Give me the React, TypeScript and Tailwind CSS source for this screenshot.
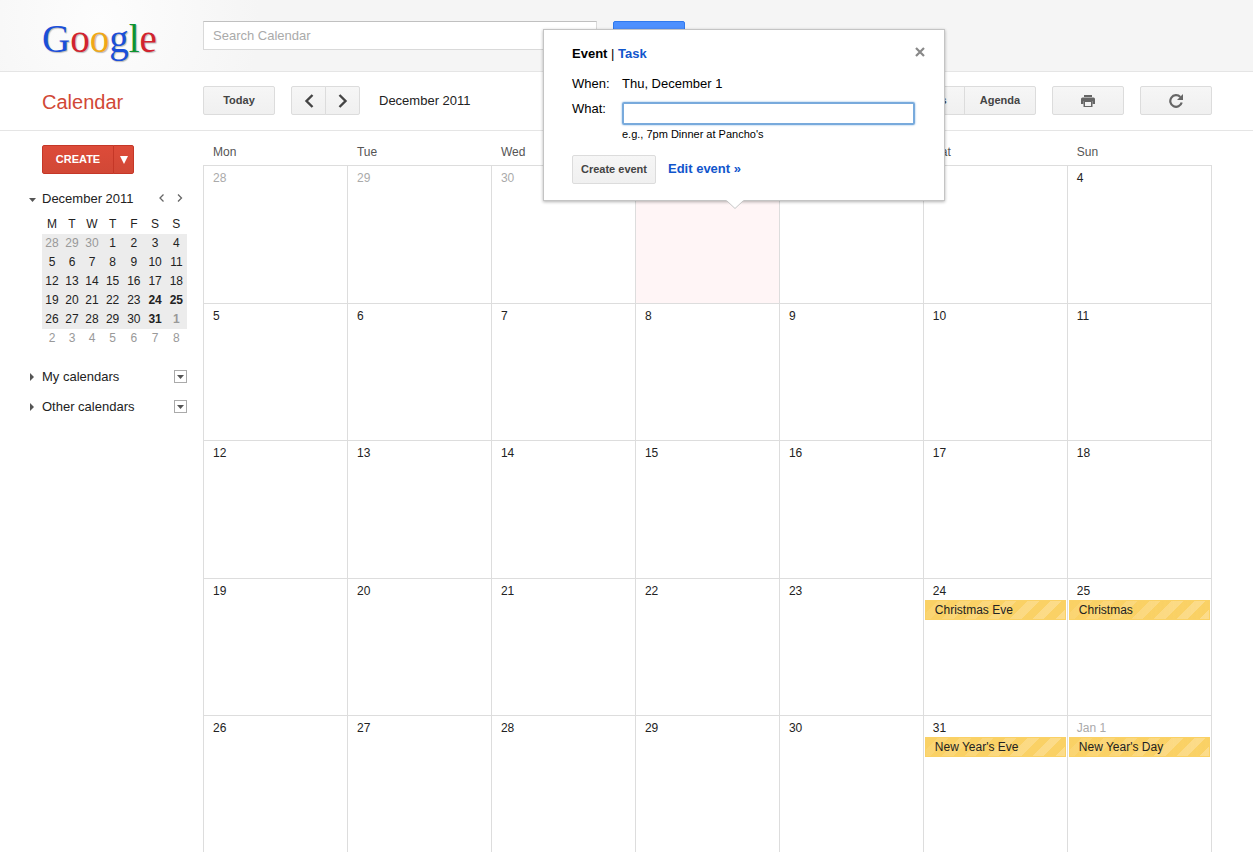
import { useState, type ReactNode } from 'react';

type Day = {
  label: string;
  muted?: boolean;
  today?: boolean;
  event?: string;
};

const weekdays = ['Mon', 'Tue', 'Wed', 'Thu', 'Fri', 'Sat', 'Sun'];

const weeks: Day[][] = [
  [
    { label: '28', muted: true },
    { label: '29', muted: true },
    { label: '30', muted: true },
    { label: '1', today: true },
    { label: '2' },
    { label: '3' },
    { label: '4' },
  ],
  ['5', '6', '7', '8', '9', '10', '11'].map((label) => ({ label })),
  ['12', '13', '14', '15', '16', '17', '18'].map((label) => ({ label })),
  [
    ...['19', '20', '21', '22', '23'].map((label) => ({ label })),
    { label: '24', event: 'Christmas Eve' },
    { label: '25', event: 'Christmas' },
  ],
  [
    ...['26', '27', '28', '29', '30'].map((label) => ({ label })),
    { label: '31', event: "New Year's Eve" },
    { label: 'Jan 1', muted: true, event: "New Year's Day" },
  ],
];

const miniWeeks = [
  [28, 29, 30, 1, 2, 3, 4],
  [5, 6, 7, 8, 9, 10, 11],
  [12, 13, 14, 15, 16, 17, 18],
  [19, 20, 21, 22, 23, 24, 25],
  [26, 27, 28, 29, 30, 31, 1],
  [2, 3, 4, 5, 6, 7, 8],
];

const buttonStyle =
  'flex h-[29px] items-center justify-center border border-[#dcdcdc] bg-gradient-to-b from-[#f6f6f6] to-[#f0f0f0] text-[11px] font-bold text-[#444]';

function Logo() {
  return (
    <a
      href="#"
      aria-label="Google"
      className="flex w-[161px] pt-1.5 font-['Liberation_Serif',serif] text-[39px] leading-10 [text-shadow:1px_1px_1px_#bbb]"
    >
      <span className="text-[#1a4fd8]">G</span>
      <span className="text-[#d2232f]">o</span>
      <span className="text-[#f0a818]">o</span>
      <span className="text-[#1a4fd8]">g</span>
      <span className="text-[#0f9330]">l</span>
      <span className="text-[#d2232f]">e</span>
    </a>
  );
}

function Header() {
  const [search, setSearch] = useState('');

  return (
    <header className="flex h-[72px] items-center border-b border-[#e5e5e5] bg-[#f5f5f5] bg-[radial-gradient(circle_at_100px_20px,#fdfdfd,#f5f5f5_160px)] pl-[42px]">
      <Logo />
      <form className="flex gap-4">
        <input
          aria-label="Search Calendar"
          placeholder="Search Calendar"
          value={search}
          onChange={(e) => setSearch(e.target.value)}
          className="h-[29px] w-[394px] border border-[#d9d9d9] border-t-[#c0c0c0] bg-white px-[9px] text-[13px] outline-none placeholder:text-[#aaa]"
        />
        <button
          type="submit"
          aria-label="Search"
          className="h-[29px] w-[72px] rounded-xs border border-[#3079ed] bg-[#4d90fe]"
        />
      </form>
    </header>
  );
}

function Chevron({ left }: { left?: boolean }) {
  return (
    <svg viewBox="0 0 10 14" className="h-3.5 w-2.5" fill="none" stroke="#444" strokeWidth="2.4">
      <path d={left ? 'M8.500 1 2.500 7l6 6' : 'M1.500 1l6 6-6 6'} />
    </svg>
  );
}

function Toolbar() {
  return (
    <div className="flex h-[59px] items-center border-b border-[#e5e5e5] pr-[41px] pb-px pl-[42px]">
      <h1 className="w-[161px] pt-0.5 text-xl text-[#d14836]">Calendar</h1>
      <button className={`${buttonStyle} w-[72px] rounded-xs`}>Today</button>
      <div className="ml-4 flex">
        <button aria-label="Previous month" className={`${buttonStyle} w-[35px] rounded-l-xs`}>
          <Chevron left />
        </button>
        <button aria-label="Next month" className={`${buttonStyle} -ml-px w-[35px] rounded-r-xs`}>
          <Chevron />
        </button>
      </div>
      <h2 className="ml-[19px] text-[13px] text-[#222]">December 2011</h2>

      <div className="ml-auto flex">
        {['Day', 'Week', 'Month', '4 Days', 'Agenda'].map((view) => (
          <button key={view} className={`${buttonStyle} -ml-px w-[72px] first:rounded-l-xs last:rounded-r-xs`}>
            {view}
          </button>
        ))}
      </div>
      <button aria-label="Print" className={`${buttonStyle} ml-4 w-[72px] rounded-xs`}>
        <svg viewBox="0 0 14 12" className="h-3 w-3.5" fill="#666">
          <path d="M3 0h8v2H3z" />
          <path d="M1.500 2.500h11A1.500 1.500 0 0 1 14 4v5h-2.500V6h-9v3H0V4a1.500 1.500 0 0 1 1.500-1.500z" />
          <path d="M2.500 5.500h9V12h-9zM4 7v4h6V7z" fillRule="evenodd" />
        </svg>
      </button>
      <button aria-label="Refresh" className={`${buttonStyle} ml-4 w-[72px] rounded-xs`}>
        <svg viewBox="0 0 14 14" className="h-3.5 w-3.5">
          <path d="M11.300 3A5.800 5.800 0 1 0 12.700 8.500" fill="none" stroke="#666" strokeWidth="2.200" />
          <path d="M14 0v6H8z" fill="#666" />
        </svg>
      </button>
    </div>
  );
}

function MiniCalendar() {
  const cellColor = (day: number, week: number) => {
    if (week === 0 && day > 20) return 'text-[#999]';
    if (week === 4 && day === 1) return 'font-bold text-[#999]';
    if (week === 5) return 'text-[#999]';
    if ((week === 3 && day > 23) || day === 31) return 'font-bold';
    return '';
  };

  return (
    <table className="w-full table-fixed text-center text-xs leading-[19px] text-[#222]">
      <thead>
        <tr>
          {['M', 'T', 'W', 'T', 'F', 'S', 'S'].map((name, i) => (
            <th key={i} className={`p-0 font-normal ${i < 3 ? 'w-5' : ''}`}>
              {name}
            </th>
          ))}
        </tr>
      </thead>
      <tbody>
        {miniWeeks.map((week, w) => (
          <tr key={w} className={w < 5 ? 'bg-[#ececec]' : ''}>
            {week.map((day) => (
              <td key={day} className={`p-0 ${cellColor(day, w)}`}>
                {day}
              </td>
            ))}
          </tr>
        ))}
      </tbody>
    </table>
  );
}

function CalendarList({ children }: { children: ReactNode }) {
  return (
    <div className="flex h-[30px] items-start">
      <button className="flex h-full flex-1 items-center text-[13px] text-[#222]">
        <svg viewBox="0 0 14 8" className="h-2 w-3.5" fill="#555">
          <path d="M2 0v8l4-4z" />
        </svg>
        {children}
      </button>
      <button
        aria-label="Options"
        className="mt-2 flex h-[13px] w-[13px] items-center justify-center border border-[#aaa]"
      >
        <svg viewBox="0 0 7 4" className="h-1 w-[7px]" fill="#555">
          <path d="M0 0h7L3.500 4z" />
        </svg>
      </button>
    </div>
  );
}

function Sidebar() {
  return (
    <aside className="w-[203px] shrink-0 pt-3.5 pr-4 pl-7">
      <div className="flex pl-3.5">
        <button className="h-[29px] w-[72px] rounded-l-xs border border-[#c53727] bg-gradient-to-b from-[#dd4b39] to-[#d14836] text-[11px] font-bold text-white">
          CREATE
        </button>
        <button
          aria-label="More create options"
          className="-ml-px flex h-[29px] w-[21px] items-center justify-center rounded-r-xs border border-[#c53727] bg-gradient-to-b from-[#dd4b39] to-[#d14836]"
        >
          <svg viewBox="0 0 8 8" className="h-2 w-2" fill="#fff">
            <path d="M0 0h8L4 8z" />
          </svg>
        </button>
      </div>

      <div className="mt-[15px] flex h-5 items-center">
        <button className="flex flex-1 items-center text-[13px] text-[#222]">
          <svg viewBox="0 0 14 8" className="h-2 w-3.5" fill="#555">
            <path d="M1 3h7L4.500 7z" />
          </svg>
          December 2011
        </button>
        <button aria-label="Previous" className="px-1.5 pb-0.5">
          <svg viewBox="0 0 6 8" className="h-2 w-1.5" fill="none" stroke="#666" strokeWidth="1.300">
            <path d="M4.500 .5 1 4l3.500 3.500" />
          </svg>
        </button>
        <button aria-label="Next" className="pr-1 pb-0.5 pl-1.5">
          <svg viewBox="0 0 6 8" className="h-2 w-1.5" fill="none" stroke="#666" strokeWidth="1.300">
            <path d="M1 .5 4.500 4 1 7.500" />
          </svg>
        </button>
      </div>

      <div className="mt-1.5 mb-3.5 pl-3.5">
        <MiniCalendar />
      </div>

      <CalendarList>My calendars</CalendarList>
      <CalendarList>Other calendars</CalendarList>
    </aside>
  );
}

function MonthGrid() {
  return (
    <div className="-mb-px flex flex-1 flex-col pr-[41px]">
      <table className="w-full flex-1 table-fixed border-separate border-spacing-0 text-xs">
        <thead>
          <tr className="h-[34px]">
            {weekdays.map((name) => (
              <th key={name} className="w-[14.27%] p-0 pt-2 pl-2.5 text-left font-normal text-[#555] last:w-auto">
                {name}
              </th>
            ))}
          </tr>
        </thead>
        <tbody>
          {weeks.map((week, w) => (
            <tr key={w} className="h-1/5">
              {week.map((day) => (
                <td
                  key={day.label}
                  className={`border-t border-l border-[#ddd] p-0 align-top last:border-r ${day.today ? 'bg-[#fff5f6]' : ''}`}
                >
                  <div className={`pt-1 pl-[9px] leading-[17px] ${day.muted ? 'text-[#aaa]' : 'text-[#222]'}`}>
                    {day.label}
                  </div>
                  {day.event && (
                    <a
                      href="#"
                      className="mx-px block h-5 border border-[#fad165] bg-[linear-gradient(90deg,#fad165aa,#fad16500),repeating-linear-gradient(135deg,#fad165_0_8px,#fcdc8b_8px_16px)] pl-[9px] leading-[18px] text-[#222]"
                    >
                      {day.event}
                    </a>
                  )}
                </td>
              ))}
            </tr>
          ))}
        </tbody>
      </table>
    </div>
  );
}

function EventPopup() {
  const [what, setWhat] = useState('');

  return (
    <div
      role="dialog"
      aria-label="New event"
      className="absolute top-[29px] left-[543px] h-[172px] w-[402px] border border-[#c4c4c4] bg-white px-7 pt-3.5 text-[13px] text-black shadow-[0_1px_3px_rgba(0,0,0,0.3)]"
    >
      <button aria-label="Close" className="absolute top-[17px] right-[19px]">
        <svg viewBox="0 0 10 10" className="h-2.5 w-2.5" fill="none" stroke="#888" strokeWidth="2.200">
          <path d="M1 1l8 8M9 1 1 9" />
        </svg>
      </button>

      <div className="leading-5">
        <b>Event</b> |{' '}
        <a href="#" className="font-bold text-[#15c]">
          Task
        </a>
      </div>

      <form>
        <div className="mt-2.5 flex leading-5">
          <span className="w-[50px]">When:</span>
          <span>Thu, December 1</span>
        </div>
        <div className="mt-[5px] flex leading-5">
          <label htmlFor="what" className="w-[50px]">
            What:
          </label>
          <div className="flex-1">
            <input
              id="what"
              value={what}
              onChange={(e) => setWhat(e.target.value)}
              className="mt-[3px] block h-[23px] w-[293px] rounded-xs border-2 border-[#78aadc] px-1 shadow-[0_0_2px_#78aadc] outline-none"
            />
            <p className="text-[11px] leading-[18px]">e.g., 7pm Dinner at Pancho's</p>
          </div>
        </div>
        <div className="mt-3 flex items-start gap-3">
          <button type="button" className={`${buttonStyle} w-[84px] rounded-xs`}>
            Create event
          </button>
          <a href="#" className="leading-7 font-bold text-[#15c]">
            Edit event »
          </a>
        </div>
      </form>

      {/* Pointer to the selected day */}
      <svg viewBox="0 0 18 9" className="absolute top-[170px] left-[182px] h-[9px] w-[18px]" fill="#fff">
        <path d="M0 0h18L9 9z" />
        <path d="M.5.5 9 8.500 17.500.5" fill="none" stroke="#c4c4c4" />
      </svg>
    </div>
  );
}

function App() {
  return (
    <div className="relative flex h-screen flex-col overflow-hidden bg-white font-['Liberation_Sans',Arial,sans-serif]">
      <Header />
      <Toolbar />
      <main className="flex flex-1">
        <Sidebar />
        <MonthGrid />
      </main>
      <EventPopup />
    </div>
  );
}

export default App;
